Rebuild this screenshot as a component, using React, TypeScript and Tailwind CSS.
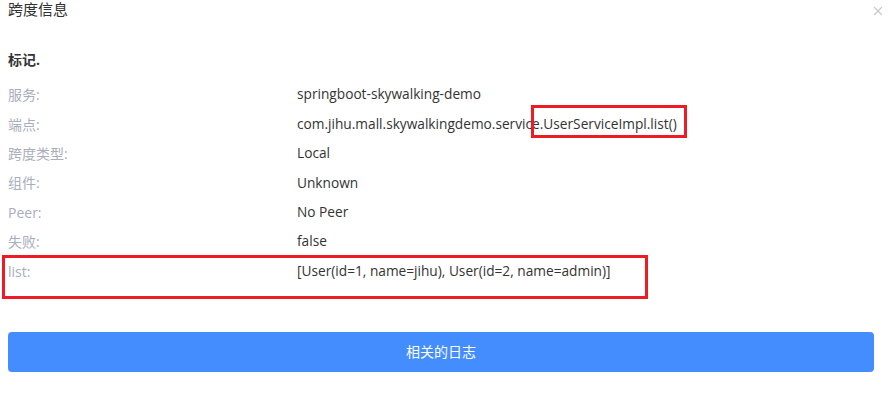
import { X } from 'lucide-react'

const rows: [string, string][] = [
  ['服务:', 'springboot-skywalking-demo'],
  ['端点:', 'com.jihu.mall.skywalkingdemo.service.UserServiceImpl.list()'],
  ['跨度类型:', 'Local'],
  ['组件:', 'Unknown'],
  ['Peer:', 'No Peer'],
  ['失败:', 'false'],
  ['list:', '[User(id=1, name=jihu), User(id=2, name=admin)]'],
]

export default function App() {
  return (
    <div
      className="relative w-[890px] h-[403px] bg-white overflow-hidden text-[#333]"
      style={{ fontFamily: '"Segoe UI", "Open Sans", "Noto Sans CJK SC", sans-serif' }}
    >
      {/* header */}
      <div className="flex items-center justify-between pl-2 pr-[5px] h-[18px]">
        <span className="text-[15px] leading-[18px] text-[#303133]">跨度信息</span>
        <X className="w-[14px] h-[14px] text-[#c8c9cc] mt-[4px]" strokeWidth={2.2} />
      </div>

      <div className="px-2 pt-[32px]">
        <h3 className="text-[14px] font-bold leading-[20px] text-[#333]">标记.</h3>
        <div className="mt-[10px]">
          {rows.map(([label, value]) => (
            <div key={label} className="flex h-[29.4px] items-center text-[14px]">
              <span className="w-[289px] shrink-0 text-[#a8aebb]">{label}</span>
              <span className="text-[#333] text-[13.7px]">{value}</span>
            </div>
          ))}
        </div>
      </div>

      <div className="px-2 mt-[46px]">
        <button className="w-[866px] h-[40px] rounded-[4px] bg-[#448dfe] text-white text-[14px]">
          相关的日志
        </button>
      </div>

      {/* annotation boxes */}
      <div className="absolute left-[531px] top-[105px] w-[156px] h-[33px] border-[3px] border-[#ed1c24]" />
      <div className="absolute left-[2px] top-[255px] w-[646px] h-[44px] border-[3px] border-[#ed1c24]" />
    </div>
  )
}
